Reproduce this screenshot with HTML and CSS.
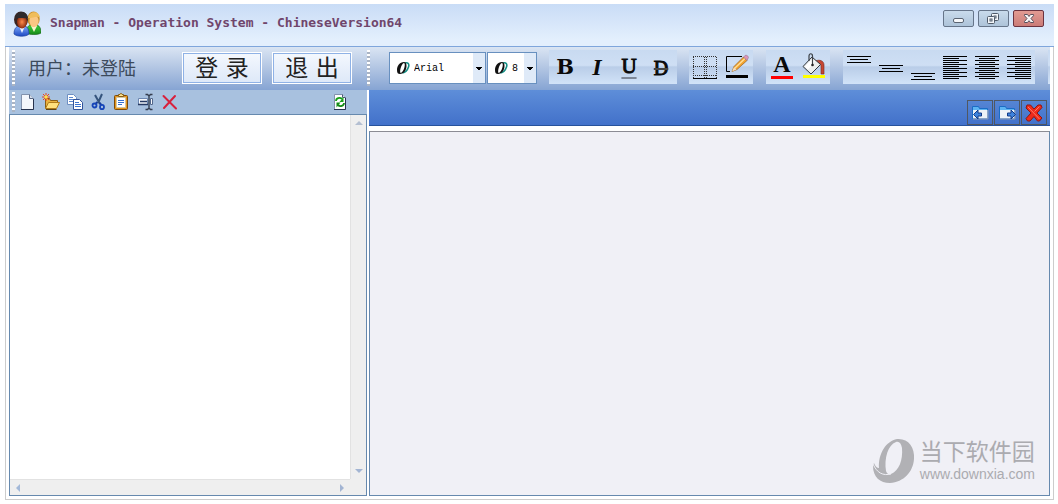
FILE: index.html
```
<!DOCTYPE html>
<html lang="zh-CN">
<head>
<meta charset="utf-8">
<title>Snapman</title>
<link rel="stylesheet" href="styles.css">
</head>
<body>
<div class="window">
  <header class="titlebar">
    <svg class="app-icon" width="28" height="28" viewBox="0 0 28 28">
      <defs>
        <linearGradient id="gBlue" x1="0" y1="0" x2="0" y2="1"><stop offset="0" stop-color="#7ea8f8"/><stop offset="1" stop-color="#1c49c4"/></linearGradient>
        <linearGradient id="gGreen" x1="0" y1="0" x2="0" y2="1"><stop offset="0" stop-color="#3ccf3c"/><stop offset="1" stop-color="#168a18"/></linearGradient>
        <radialGradient id="gFace"><stop offset="0" stop-color="#ff8a4a"/><stop offset="1" stop-color="#8c2c10"/></radialGradient>
      </defs>
      <path d="M13 22c0-4 2-6 4-7h7c3 1 4 4 4 8-3 2-11 2-15 0z" fill="url(#gGreen)" stroke="#1a6a1c" stroke-width=".7"/>
      <path d="M18 16l3 6 3-6z" fill="#f6f4c8"/>
      <ellipse cx="20.500" cy="9" rx="6.200" ry="7.500" fill="#c88d2a"/>
      <ellipse cx="21" cy="11" rx="4.600" ry="6" fill="#f9c783"/>
      <path d="M15 8c1-7 11-8 12 0-4-3-7 1-12 0z" fill="#efbd5c"/>
      <path d="M1 24c0-5 2-7 4-8h7c3 1 4 4 4 8-3 3-12 3-15 0z" fill="url(#gBlue)" stroke="#1d3f9c" stroke-width=".7"/>
      <path d="M6 16l3 7 3-7z" fill="#eef3ff"/>
      <ellipse cx="8" cy="9.500" rx="7" ry="8" fill="#3a2420"/>
      <ellipse cx="9" cy="12" rx="5" ry="6.500" fill="url(#gFace)"/>
      <path d="M2 9c1-9 12-9 13-1-5 1-8-1-13 1z" fill="#2e2a2c"/>
    </svg>
    <h1 class="title">Snapman - Operation System - ChineseVersion64</h1>
    <div class="window-controls">
      <button class="wc" aria-label="Minimize"><svg width="29" height="15" viewBox="0 0 29 15"><rect x="9.500" y="7.500" width="10" height="4" rx="1.500" fill="#f6f8fb" stroke="#5a6472"/></svg></button>
      <button class="wc" aria-label="Restore"><svg width="29" height="15" viewBox="0 0 29 15" fill="#f3f6fa" stroke="#4f5a69"><rect x="12.500" y="2.500" width="7" height="7" rx="1"/><rect x="15" y="5" width="2" height="2"/><rect x="8.500" y="5.500" width="7" height="7" rx="1"/><rect x="11" y="8" width="2" height="2"/></svg></button>
      <button class="wc wc-close" aria-label="Close"><svg width="29" height="15" viewBox="0 0 29 15"><path d="M10.500 3.500h3l1.500 2 1.500-2h3v1.200L17 7.500l2.500 3v1h-3L15 9.700l-1.500 1.800h-3v-1l2.500-3-2.500-2.800z" fill="#f8f5f6" stroke="#59515c"/></svg></button>
    </div>
  </header>

  <div class="ribbon-row">
    <div class="ribbon">
      <span class="grip"></span>
      <div class="account">
        <span class="user">用户：未登陆</span>
        <button class="big">登 录</button>
        <button class="big">退 出</button>
      </div>
      <span class="grip"></span>
      <div class="combos">
        <label class="combo combo-font">
          <svg width="14" height="14" viewBox="0 0 14 14"><path d="M9 2c3-1 4.500 1 3.500 4S9 11.500 6.500 12" fill="none" stroke="#159086" stroke-width="1.600"/><path fill-rule="evenodd" d="M8 1C3.500 1 1 5 1 9c0 3 1 4 3 4 4 0 6.500-4 6.500-8C10.500 2.500 9.800 1 8 1zM8 2c2 .5 0 9-3.200 10C3 11.500 5.200 2.500 8 2z" fill="#111"/></svg>
          <select aria-label="Font"><option>Arial</option></select>
        </label>
        <label class="combo combo-size">
          <svg width="14" height="14" viewBox="0 0 14 14"><path d="M9 2c3-1 4.500 1 3.500 4S9 11.500 6.500 12" fill="none" stroke="#159086" stroke-width="1.600"/><path fill-rule="evenodd" d="M8 1C3.500 1 1 5 1 9c0 3 1 4 3 4 4 0 6.500-4 6.500-8C10.500 2.500 9.800 1 8 1zM8 2c2 .5 0 9-3.200 10C3 11.500 5.200 2.500 8 2z" fill="#111"/></svg>
          <select aria-label="Size"><option>8</option></select>
        </label>
      </div>
      <div class="group">
        <button class="tool letter bold">B</button>
        <button class="tool letter italic">I</button>
        <button class="tool letter underline">U</button>
        <button class="tool letter strike">D</button>
      </div>
      <div class="group">
        <button class="tool" aria-label="Borders"><svg width="32" height="34" viewBox="0 0 32 34"><path d="M4.500 7v21M15.500 7v21M17.500 7v21M27.500 7v21M4 6.500h24M4 16.500h24M4 25.500h24" stroke="#333" stroke-dasharray="1 1" fill="none"/><path d="M4 28.500h24" stroke="#000"/></svg></button>
        <button class="tool" aria-label="Pen colour"><svg width="32" height="34" viewBox="0 0 32 34"><path d="M21 6.500H5.500v15H9" fill="none" stroke="#000"/><path d="M5 25h22v3H5z"/><path d="M11 21.500l2-5L22.500 7l3.500 3.500-10 9z" fill="#f2a32f" stroke="#9a6220" stroke-width=".7"/><path d="M14 18L24 8.500" stroke="#ffe09a" stroke-width="1.300"/><path d="M11 21.500l2-4.500 2.500 2.500z" fill="#f6ddba"/><path d="M22.500 7l1.500-1.500c2-1 4.500 1.500 3 3L26 10.500z" fill="#d994b8" stroke="#8f6e83" stroke-width=".5"/></svg></button>
      </div>
      <div class="group">
        <button class="tool letter font-color">A</button>
        <button class="tool" aria-label="Fill colour"><svg width="32" height="34" viewBox="0 0 32 34"><path d="M5 25h22v3H5z" fill="#ff0"/><path d="M17 11c5-2 9 0 9 4v9h-3v-8c0-2-2-3-5-2z" fill="#c64632" stroke="#75291f" stroke-width=".6"/><path d="M5 16.500L14 7l8.500 7.500L13 24z" fill="#eceeee" stroke="#30363c"/><path d="M7 16.500L14 9l3 2.500-7 8z" fill="#fff"/><path d="M11 11V6c0-3 3.500-3 3.500 0v8" fill="none" stroke="#3c4248" stroke-width="1.200"/><circle cx="14.500" cy="15" r="1.300" fill="#222"/></svg></button>
      </div>
      <div class="group">
        <button class="tool" aria-label="Align top"><svg width="32" height="34" viewBox="0 0 32 34"><path d="M4 6.500h24M7 9.500h18M4 12.500h24" stroke="#000"/></svg></button>
        <button class="tool" aria-label="Align middle"><svg width="32" height="34" viewBox="0 0 32 34"><path d="M4 15.500h24M7 18.500h18M4 21.500h24" stroke="#000"/></svg></button>
        <button class="tool" aria-label="Align bottom"><svg width="32" height="34" viewBox="0 0 32 34"><path d="M4 23.500h24M7 26.500h18M4 29.500h24" stroke="#000"/></svg></button>
        <button class="tool" aria-label="Align left"><svg width="32" height="34" viewBox="0 0 32 34"><path d="M4 6.500h24M4 8.500h16M4 10.500h24M4 12.500h16M4 14.500h24M4 16.500h16M4 18.500h24M4 20.500h16M4 22.500h24M4 24.500h16M4 26.500h24M4 28.500h16" stroke="#000"/></svg></button>
        <button class="tool" aria-label="Align centre"><svg width="32" height="34" viewBox="0 0 32 34"><path d="M4 6.500h24M8 8.500h16M4 10.500h24M8 12.500h16M4 14.500h24M8 16.500h16M4 18.500h24M8 20.500h16M4 22.500h24M8 24.500h16M4 26.500h24M8 28.500h16" stroke="#000"/></svg></button>
        <button class="tool" aria-label="Align right"><svg width="32" height="34" viewBox="0 0 32 34"><path d="M4 6.500h24M12 8.500h16M4 10.500h24M12 12.500h16M4 14.500h24M12 16.500h16M4 18.500h24M12 20.500h16M4 22.500h24M12 24.500h16M4 26.500h24M12 28.500h16" stroke="#000"/></svg></button>
      </div>
      <div class="group group-rest"></div>
    </div>
  </div>

  <main class="content">
    <aside class="sidebar">
      <div class="filebar">
        <span class="grip grip-small"></span>
        <button class="file" aria-label="New"><svg width="24" height="20" viewBox="0 0 24 20"><path d="M6.500 2.500h8l4 4v11h-12z" fill="#f4f7fc" stroke="#8292ad"/><path d="M14.500 2.500v4h4" fill="#d5deeb" stroke="#5b6a86"/><path d="M6 17.500h12.500V7" fill="none" stroke="#26324e"/></svg></button>
        <button class="file" aria-label="Open"><svg width="24" height="20" viewBox="0 0 24 20"><path d="M6.500 16.500v-10h4l1 2h7v3" fill="#e9b23f" stroke="#8a5f14"/><path d="M6.500 16.500l3-6h11l-3 6z" fill="#ffe07c" stroke="#b07c1c"/><path d="M7 17.500h10.500" stroke="#5c4316"/><path d="M7 1v8M3 5h8M4 2l6 6M10 2L4 8" stroke="#e8451f"/><circle cx="7" cy="5" r="1.700" fill="#ffe34d"/></svg></button>
        <button class="file" aria-label="Copy"><svg width="24" height="20" viewBox="0 0 24 20"><path d="M4.500 2.500h6l3 3v7h-9z" fill="#fff" stroke="#6d8fc2"/><path d="M6 5.500h4M6 7.500h6M6 9.500h6" stroke="#5b88cf"/><path d="M10.500 7.500h6l3 3v7h-9z" fill="#fff" stroke="#31539a"/><path d="M12 10.500h4M12 12.500h6M12 14.500h6" stroke="#3c74cf"/></svg></button>
        <button class="file" aria-label="Cut"><svg width="24" height="20" viewBox="0 0 24 20"><path d="M8 3l5 9M15 2l-4 9" stroke="#35547d" stroke-width="2"/><path d="M10.500 10L8.500 12M12.500 11l2 2" stroke="#173c9c" stroke-width="2"/><ellipse cx="7.500" cy="13.500" rx="2" ry="2" fill="none" stroke="#1644b8" stroke-width="1.800"/><ellipse cx="15" cy="15" rx="2" ry="2.200" fill="none" stroke="#1644b8" stroke-width="1.800"/></svg></button>
        <button class="file" aria-label="Paste"><svg width="24" height="20" viewBox="0 0 24 20"><rect x="3.500" y="3.500" width="13" height="14" rx="1" fill="#e4951c" stroke="#7b4a0c"/><path d="M5.500 5.500h9v10h-9z" fill="#fff" stroke="#d6c7a0"/><path d="M7.500 4.500v-2h1.500l.5-1h1l.5 1h1.500v2z" fill="#ffe690" stroke="#8a5f14"/><path d="M7 8.500h6M7 10.500h6M7 12.500h4" stroke="#3470d0"/></svg></button>
        <button class="file" aria-label="Rename"><svg width="24" height="20" viewBox="0 0 24 20"><path d="M3.500 6.500h9v6h-9z" fill="#f5f7fb" stroke="#6d87b1"/><path d="M3 12.500h10M5 9.500h7" stroke="#263a62" stroke-width="1.300"/><path d="M15.500 6.500h2v6h-2z" fill="#f5f7fb" stroke="#53688c"/><path d="M10.500 2.500h2l1.500 1.500 1.500-1.500h2M10.500 17.500h2l1.500-1.500 1.500 1.500h2M14 4v12" fill="none" stroke="#343d4e" stroke-width="1.400"/></svg></button>
        <button class="file" aria-label="Delete"><svg width="24" height="20" viewBox="0 0 24 20"><path d="M4.500 4L17 16.500M16 4L5 16" stroke="#d8203c" stroke-width="2" stroke-linecap="round"/></svg></button>
        <button class="file file-refresh" aria-label="Refresh"><svg width="24" height="20" viewBox="0 0 24 20"><path d="M6.500 2.500h8l3 3v12h-11z" fill="#fff" stroke="#8292ad"/><path d="M14.500 2.500v3h3" fill="#d5deeb" stroke="#4b5a76"/><path d="M6 17.500h11.500V6" fill="none" stroke="#26324e"/><path d="M8 9c0-3 4-4 6-2" fill="none" stroke="#18a018" stroke-width="1.800"/><path d="M15.500 5v5h-4z" fill="#18a018"/><path d="M16 11c0 3-4 4-6 2" fill="none" stroke="#138a13" stroke-width="1.800"/><path d="M8.500 15.500v-5h4z" fill="#138a13"/></svg></button>
      </div>
      <div class="tree">
        <div class="tree-view"></div>
        <div class="vbar">
          <svg width="8" height="4" viewBox="0 0 8 4"><path d="M0 4l4-4 4 4z" fill="#b4bfd2"/></svg>
          <svg width="8" height="4" viewBox="0 0 8 4"><path d="M0 0l4 4 4-4z" fill="#a3b5d3"/></svg>
        </div>
        <div class="hbar">
          <svg width="4" height="8" viewBox="0 0 4 8"><path d="M4 0L0 4l4 4z" fill="#a3b9d9"/></svg>
          <svg width="4" height="8" viewBox="0 0 4 8"><path d="M0 0l4 4-4 4z" fill="#a3b5d3"/></svg>
        </div>
      </div>
    </aside>
    <section class="workspace">
      <div class="tabbar">
        <button class="nav" aria-label="Previous"><svg width="24" height="24" viewBox="0 0 24 24"><path d="M4.500 17.500v-12h6l1 2h8v10z" fill="#5db4f2" stroke="#1b6cc4"/><path d="M5 9h14.500v8.500H5z" fill="#eef2f8"/><path d="M5 18h15V9" fill="none" stroke="#8c99b4"/><path d="M5.500 13.500l4.500-4.500v3h3.500v3H10v3z" fill="#3f83dc" stroke="#123a88"/></svg></button>
        <button class="nav" aria-label="Next"><svg width="24" height="24" viewBox="0 0 24 24"><path d="M4.500 17.500v-12h6l1 2h8v10z" fill="#5db4f2" stroke="#1b6cc4"/><path d="M5 9h14.500v8.500H5z" fill="#eef2f8"/><path d="M5 18h15V9" fill="none" stroke="#8c99b4"/><path d="M20.500 13.500L16 9v3h-3.500v3H16v3z" fill="#3f83dc" stroke="#123a88"/></svg></button>
        <button class="nav" aria-label="Close"><svg width="24" height="24" viewBox="0 0 24 24"><path d="M5 4h3.500l3.500 4 4-4h3l1 2.500-5 5.500 5 5-2.500 3h-2L12 15.500 8 20H5.500L4 17.500 9 12 4 7z" fill="#ee2a1c" stroke="#8e1710"/><path d="M6 6l11.500 12M17.500 5.500l-5 5" stroke="#ff7a68"/></svg></button>
      </div>
      <div class="canvas">
        <div class="brand">
          <svg width="44" height="46" viewBox="0 0 44 46"><path fill="#b1b1b5" fill-rule="evenodd" d="M25 1C36 0 43 9 42 21 41 34 32 44 18 45 8 45 1 39 1 28l1-3c1 3 3 5 5 5C6 16 14 3 25 1zM24 4C16 7 12 20 14 33c1 3 3 4 5 3 8-3 12-14 11-26-1-5-3-7-6-6z"/><path d="M1 26c4 9 10 12 18 10" fill="none" stroke="#efeff5" stroke-width="1"/></svg>
          <div class="brand-text">
            <span class="brand-name">当下软件园</span>
            <span class="brand-url">www.downxia.com</span>
          </div>
        </div>
      </div>
    </section>
  </main>
</div>
</body>
</html>
```
FILE: styles.css
```
* { box-sizing: border-box; }
body {
  margin: 0;
  background: #fff;
  font-family: "Liberation Sans", "Noto Sans CJK SC", sans-serif;
}
button {
  margin: 0;
  padding: 0;
  border: 0;
  background: none;
  font: inherit;
  color: inherit;
}
svg { display: block; flex: none; }

.window {
  display: flex;
  flex-direction: column;
  min-height: 100vh;
  padding: 4px 4px 4px 5px;
}
.titlebar {
  display: flex;
  align-items: flex-start;
  height: 43px;
  padding: 6px 10px 0 8px;
  background: linear-gradient(#c9dcf6, #e3effd 85%);
  border-bottom: 1px solid #7fa6dc;
}
.title {
  flex: 1;
  margin: 5px 0 0 9px;
  font: bold 13px/16px "DejaVu Sans Mono", monospace;
  color: #70466c;
}
.window-controls { display: flex; gap: 4px; }
.wc {
  width: 31px;
  height: 17px;
  border: 1px solid #66758a;
  border-radius: 2px;
  background: linear-gradient(#c9dbec, #adc3d9);
}
.wc-close { border-color: #6b3340; background: linear-gradient(#e29b93, #cb7c78); }

.ribbon-row {
  padding: 0 3px;
  border: 1px solid #ccc;
  border-width: 0 1px;
}
.ribbon {
  display: flex;
  align-items: flex-start;
  height: 43px;
  padding: 3px 0 0 3px;
  overflow: hidden;
  background: linear-gradient(#dae5f3, #b5c8e4 45%, #86a4d3);
}
.grip {
  flex: none;
  width: 3px;
  height: 36px;
  background: repeating-linear-gradient(#fff 0 2px, #aab4c4 2px 4px);
}
.account {
  display: flex;
  flex: none;
  gap: 10px;
  width: 352px;
  padding: 2px 15px 0 13px;
}
.user {
  flex: 1;
  font-size: 18px;
  line-height: 34px;
  color: #3c4a5c;
  white-space: nowrap;
}
.big {
  width: 80px;
  height: 32px;
  border: 1px solid #fff;
  outline: 1px solid #8fb2e6;
  outline-offset: -2px;
  background: linear-gradient(#f4f8fe, #dde8f8);
  font: 23px/28px "DejaVu Sans", "Noto Sans CJK SC", sans-serif;
  color: #222;
}
.combos { display: flex; flex: none; gap: 1px; padding: 2px 12px 0 19px; }
.combo {
  display: flex;
  align-items: center;
  height: 32px;
  padding-left: 6px;
  border: 1px solid #6890bf;
  background: #fff;
}
.combo-font { width: 97px; }
.combo-size { width: 50px; }
.combo select {
  flex: 1;
  min-width: 0;
  height: 30px;
  padding: 0 12px 0 4px;
  border: 0;
  border-radius: 0;
  appearance: none;
  background:
    linear-gradient(#000, #000) right 3px top 14px / 6px 1px no-repeat,
    linear-gradient(#000, #000) right 4px top 15px / 4px 1px no-repeat,
    linear-gradient(#000, #000) right 5px top 16px / 2px 1px no-repeat,
    linear-gradient(#dfeaf8, #dfeaf8) right / 12px 30px no-repeat;
  font: 10px "Liberation Mono", monospace;
  color: #000;
}
.group {
  display: flex;
  flex: none;
  height: 34px;
  margin-right: 12px;
  background: linear-gradient(#c8daf1, #cfdff4 45%, #b9cde8 50%, #d2e3f8);
}
.group + .group { margin-right: 13px; }
.ribbon .group-rest { flex: 1; margin: 0; }
.tool { width: 32px; height: 34px; }
.letter {
  display: flex;
  justify-content: center;
  font: bold 24px/34px "Liberation Serif", serif;
  color: #0a0a0a;
}
.bold { font-family: "DejaVu Serif", serif; font-size: 21px; }
.italic { font-style: italic; }
.underline { font-size: 21px; line-height: 32px; text-decoration: underline 2px #7d8797; text-underline-offset: 4px; font-weight: normal; -webkit-text-stroke: 1px #0a0a0a; }
.strike { font-size: 20px; line-height: 36px; font-weight: normal; text-decoration: line-through 2px #444; -webkit-text-stroke: 1px #0a0a0a; }
.font-color {
  width: 22px;
  height: 29px;
  margin: 0 5px;
  border-bottom: 3px solid #f00;
  font-size: 24px;
  line-height: 28px;
}

.content {
  display: flex;
  flex: 1;
  gap: 2px;
  padding: 0 3px 3px;
  border: 1px solid #ccc;
  border-top: 0;
}
.sidebar { display: flex; flex-direction: column; width: 358px; }
.filebar {
  display: flex;
  align-items: center;
  height: 24px;
  padding: 0 15px 0 3px;
  background: #a8c1df;
}
.grip-small { height: 20px; }
.file { width: 24px; height: 20px; }
.file-refresh { margin-left: auto; }
.tree {
  display: grid;
  flex: 1;
  grid-template-columns: 1fr 16px;
  grid-template-rows: 1fr 16px;
  border: 1px solid #6689ae;
  background: #efefef;
}
.tree-view { background: #fff; }
.vbar {
  display: flex;
  flex-direction: column;
  justify-content: space-between;
  align-items: center;
  padding: 6px 0;
  border-left: 1px solid #e2e2e2;
}
.hbar {
  display: flex;
  justify-content: space-between;
  align-items: center;
  padding: 0 6px;
  border-top: 1px solid #e2e2e2;
}

.workspace { display: flex; flex: 1; flex-direction: column; gap: 5px; }
.tabbar {
  display: flex;
  justify-content: flex-end;
  align-items: flex-end;
  gap: 1px;
  height: 36px;
  padding-right: 3px;
  background: linear-gradient(#5e8ed9, #4271ca);
  border-bottom: 1px solid #27529c;
}
.nav { width: 26px; height: 25px; border: 1px solid #505762; }
.canvas {
  position: relative;
  flex: 1;
  border: 1px solid #6689ae;
  border-top-color: #8c8c94;
  background: #f0f0f6;
}
.brand {
  position: absolute;
  right: 14px;
  bottom: 11px;
  display: flex;
  align-items: center;
  gap: 4px;
  color: #ababb0;
}
.brand-text { display: flex; flex-direction: column; }
.brand-name { font-size: 23px; line-height: 26px; }
.brand-url { font-size: 14px; line-height: 18px; }
```
